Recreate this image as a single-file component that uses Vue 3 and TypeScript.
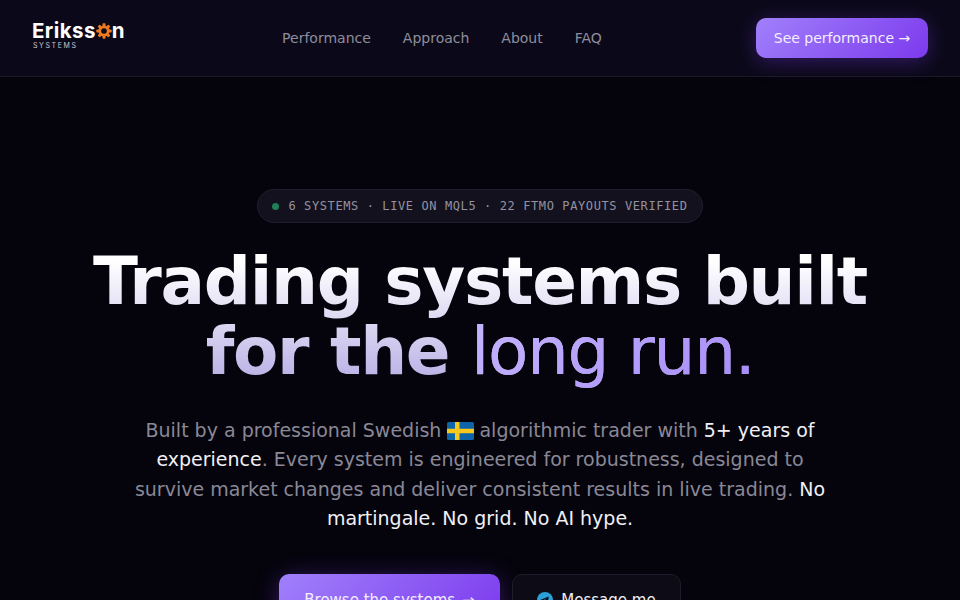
<script setup lang="ts">
const links: string[] = ['Performance', 'Approach', 'About', 'FAQ']
</script>

<template>
  <div class="page">
    <header class="nav">
      <a class="logo">
        <span class="word">Erikss<svg class="gear" viewBox="0 0 24 24" aria-hidden="true"><g fill="#ee7a1e"><circle cx="12" cy="12" r="8.4" /><rect x="9.8" y="0.5" width="4.4" height="23" rx="1" /><rect x="9.8" y="0.5" width="4.4" height="23" rx="1" transform="rotate(45 12 12)" /><rect x="9.8" y="0.5" width="4.4" height="23" rx="1" transform="rotate(90 12 12)" /><rect x="9.8" y="0.5" width="4.4" height="23" rx="1" transform="rotate(135 12 12)" /></g><circle cx="12" cy="12" r="4.2" fill="#0b0818" /></svg>n</span>
        <span class="sub">SYSTEMS</span>
      </a>
      <nav class="links">
        <a v-for="l in links" :key="l">{{ l }}</a>
      </nav>
      <a class="btn-nav">See performance →</a>
    </header>

    <main class="hero">
      <div class="pill">
        <span class="dot"></span>
        <span class="pill-text">6 SYSTEMS · LIVE ON MQL5 · 22 FTMO PAYOUTS VERIFIED</span>
      </div>
      <h1>Trading systems built<br />for the <span class="accent">long run.</span></h1>
      <p class="lead">
        Built by a professional Swedish
        <svg class="flag" viewBox="0 0 27 18" aria-hidden="true"><rect width="27" height="18" rx="1.5" fill="#0b65a8" /><rect x="8" width="4.5" height="18" fill="#f6c81e" /><rect y="6.75" width="27" height="4.5" fill="#f6c81e" /></svg>
        algorithmic trader with <strong>5+ years of experience</strong>. Every system is engineered for robustness, designed to survive market changes and deliver consistent results in live trading. <strong>No martingale. No grid. No AI hype.</strong>
      </p>
      <div class="cta">
        <a class="btn-main">Browse the systems <span class="arrow">→</span></a>
        <a class="btn-ghost">
          <svg class="tg" viewBox="0 0 16 16" aria-hidden="true"><circle cx="8" cy="8" r="8" fill="#2a9fd8" /><path d="M3.2 7.9 11.8 4.5 10.5 11.6 8 9.9 6.7 11.1 6.5 9.1 10.2 5.9 5.5 8.7Z" fill="#0b0b18" /></svg>
          Message me
        </a>
      </div>
    </main>
  </div>
</template>

<style>
html, body { margin: 0; background: #05040c; overflow: hidden; }
</style>

<style scoped>
.page {
  width: 960px;
  height: 600px;
  overflow: hidden;
  background: #05040c;
  font-family: "DejaVu Sans", sans-serif;
  color: #fff;
}
.nav {
  height: 77px;
  box-sizing: border-box;
  border-bottom: 1px solid #1a1826;
  background: #0b0919;
  display: flex;
  align-items: center;
  justify-content: space-between;
  padding: 0 32px;
}
.logo {
  display: flex;
  flex-direction: column;
  width: 94px;
  margin-top: -6px;
}
.word {
  display: flex;
  align-items: center;
  font-family: Inter, sans-serif;
  font-weight: 700;
  font-size: 20.5px;
  line-height: 21px;
  letter-spacing: 0.4px;
  color: #fff;
}
.gear { width: 16px; height: 16px; margin: 1px 0 0 0; }
.sub {
  font-family: Inter, sans-serif;
  font-size: 7px;
  line-height: 8px;
  letter-spacing: 1.6px;
  color: #c9c8d2;
  margin: 1px 0 0 1px;
}
.links {
  display: flex;
  gap: 32px;
  font-size: 14px;
  color: #8f8d9c;
  margin-left: 2px;
}
.btn-nav {
  height: 40px;
  width: 172px;
  display: flex;
  align-items: center;
  justify-content: center;
  border-radius: 10px;
  font-size: 14px;
  color: #f3eeff;
  background: linear-gradient(135deg, #a080fb, #7c3aed);
  box-shadow: 0 4px 20px rgba(124, 58, 237, 0.35);
}
.hero {
  display: flex;
  flex-direction: column;
  align-items: center;
  padding-top: 112px;
}
.pill {
  display: flex;
  align-items: center;
  gap: 9px;
  height: 34px;
  box-sizing: border-box;
  padding: 0 14px;
  border-radius: 17px;
  border: 1px solid #211f2e;
  background: #12111d;
  font-family: "DejaVu Sans Mono", monospace;
  font-size: 12px;
  letter-spacing: 0.6px;
  white-space: nowrap;
  color: #9492a2;
}
.pill-text { margin-bottom: 1px; }
.dot {
  width: 7px;
  height: 7px;
  border-radius: 50%;
  background: #1f7f58;
}
h1 {
  margin: 24px 0 0;
  padding-bottom: 4px;
  text-align: center;
  font-size: 66px;
  line-height: 70px;
  font-weight: 800;
  letter-spacing: -0.02em;
  background: linear-gradient(180deg, #ffffff 10%, #b6ace4 98%);
  -webkit-background-clip: text;
  background-clip: text;
  color: transparent;
}
.accent {
  font-weight: 400;
  background: linear-gradient(135deg, #c4b5fd, #a78bfa);
  -webkit-background-clip: text;
  background-clip: text;
  color: transparent;
}
.lead {
  width: 720px;
  margin: 25px 0 0;
  text-align: center;
  font-size: 19px;
  line-height: 29.45px;
  color: #8a8896;
}
.lead strong { font-weight: 400; color: #f1f0f6; }
.flag { width: 27px; height: 18px; vertical-align: -3px; margin: 0 -0.5px; }
.cta {
  display: flex;
  gap: 12px;
  margin-top: 40px;
}
.btn-main, .btn-ghost {
  height: 52px;
  box-sizing: border-box;
  display: flex;
  align-items: center;
  justify-content: center;
  border-radius: 10px;
  font-size: 15px;
}
.btn-main {
  width: 221px;
  color: #f3eeff;
  background: linear-gradient(135deg, #a080fb, #7c3aed);
  box-shadow: 0 4px 24px rgba(124, 58, 237, 0.4);
}
.arrow { margin-left: 7px; }
.btn-ghost {
  width: 169px;
  gap: 8px;
  border: 1px solid #1e1c2a;
  background: #0c0b16;
  color: #f1f0f6;
}
.tg { width: 16px; height: 16px; }
</style>
